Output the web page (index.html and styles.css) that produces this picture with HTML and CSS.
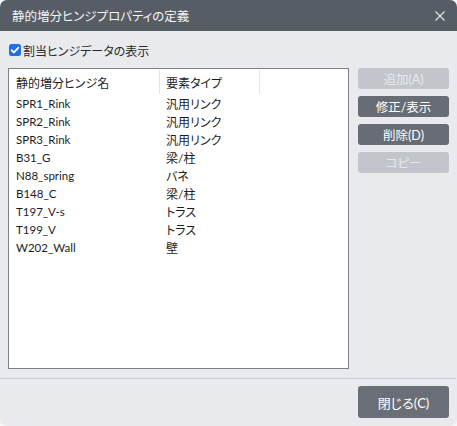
FILE: index.html
```html
<!DOCTYPE html>
<html lang="ja">
<head>
<meta charset="utf-8">
<title>静的増分ヒンジプロパティの定義</title>
<link rel="stylesheet" href="styles.css">
</head>
<body>
<div class="dialog">
  <div class="titlebar">
    <span class="title">静的増分ヒンジプロパティの定義</span>
    <svg class="close-x" width="10" height="10" viewBox="0 0 10 10"><path d="M0.5 0.5 L9.5 9.5 M9.5 0.5 L0.5 9.5" stroke="#e4e6e9" stroke-width="1.1" fill="none"/></svg>
  </div>
  <div class="check-row">
    <span class="checkbox"><svg width="12" height="12" viewBox="0 0 12 12"><path d="M2.6 6.2 L5 8.5 L9.4 3.6" stroke="#fff" stroke-width="1.8" fill="none" stroke-linecap="round" stroke-linejoin="round"/></svg></span>
    <span class="check-label">割当ヒンジデータの表示</span>
  </div>
  <div class="main">
    <div class="list">
      <div class="list-head">
        <div class="col c1">静的増分ヒンジ名</div>
        <div class="col c2">要素タイプ</div>
        <div class="col c3"></div>
      </div>
      <div class="row"><div class="col c1">SPR1_Rink</div><div class="col c2">汎用リンク</div></div>
      <div class="row"><div class="col c1">SPR2_Rink</div><div class="col c2">汎用リンク</div></div>
      <div class="row"><div class="col c1">SPR3_Rink</div><div class="col c2">汎用リンク</div></div>
      <div class="row"><div class="col c1">B31_G</div><div class="col c2">梁/柱</div></div>
      <div class="row"><div class="col c1">N88_spring</div><div class="col c2">バネ</div></div>
      <div class="row"><div class="col c1">B148_C</div><div class="col c2">梁/柱</div></div>
      <div class="row"><div class="col c1">T197_V-s</div><div class="col c2">トラス</div></div>
      <div class="row"><div class="col c1">T199_V</div><div class="col c2">トラス</div></div>
      <div class="row"><div class="col c1">W202_Wall</div><div class="col c2">壁</div></div>
    </div>
    <div class="buttons">
      <button class="btn disabled">追加(A)</button>
      <button class="btn">修正/表示</button>
      <button class="btn">削除(D)</button>
      <button class="btn disabled">コピー</button>
    </div>
  </div>
  <div class="separator"></div>
  <div class="footer">
    <button class="btn close-btn">閉じる(C)</button>
  </div>
</div>
</body>
</html>
```

FILE: styles.css
```css
* { box-sizing: border-box; }
html, body {
  margin: 0;
  padding: 0;
  background: #f7f7f8;
}
body {
  font-family: "Lato", "Noto Sans CJK JP", sans-serif;
  font-feature-settings: "palt" 1;
  color: #1c1c1c;
}
.dialog {
  width: 457px;
  height: 426px;
  background: #e9eaee;
  border-radius: 7px;
  overflow: hidden;
  display: flex;
  flex-direction: column;
}
.titlebar {
  height: 31px;
  flex: none;
  background: #575d65;
  display: flex;
  align-items: center;
  justify-content: space-between;
  padding: 0 12px 0 12px;
}
.title {
  color: #f4f5f6;
  font-size: 12.5px;
}
.close-x { display: block; }
.check-row {
  height: 37px;
  flex: none;
  display: flex;
  align-items: center;
  padding-left: 9px;
  padding-top: 1px;
}
.checkbox {
  width: 12px;
  height: 12px;
  border-radius: 2.5px;
  background: #1f6fe6;
  display: block;
  margin-right: 2px;
}
.checkbox svg { display: block; }
.check-label {
  font-size: 12px;
  color: #2a2a2a;
}
.main {
  display: flex;
  padding-left: 8px;
  gap: 9px;
  height: 301px;
  flex: none;
}
.list {
  width: 341px;
  height: 301px;
  background: #fff;
  border: 1px solid #7d8087;
  font-size: 12px;
}
.list-head {
  display: flex;
  height: 25px;
  align-items: stretch;
  padding-top: 1px;
}
.row {
  display: flex;
  height: 18px;
  align-items: center;
}
.col {
  padding-left: 7px;
  white-space: nowrap;
}
.c1 { width: 150px; }
.c2 { width: 100px; }
.c3 { width: 1px; }
.list-head .col {
  display: flex;
  align-items: center;
}
.list-head .c2, .list-head .c3 {
  border-left: 1px solid #e2e3e5;
}
.list-head .c2 { padding-left: 6px; }
.row .c1 { font-size: 11.5px; }
.row .c2 { padding-left: 7px; }
.buttons {
  width: 91px;
  display: flex;
  flex-direction: column;
  gap: 7px;
}
.btn {
  border: none;
  border-radius: 3px;
  background: #686d75;
  color: #ffffff;
  font-family: "Lato", "Noto Sans CJK JP", sans-serif;
  font-feature-settings: "palt" 1;
  font-size: 12.5px;
  height: 21px;
  width: 91px;
  padding: 0;
}
.btn.disabled {
  background: #c2c6cc;
  color: #e6e8eb;
}
.separator {
  height: 1px;
  flex: none;
  background: #c5cad1;
  margin-top: 9px;
  margin-right: 1px;
}
.footer {
  display: flex;
  justify-content: flex-end;
  padding: 7px 8px 0 0;
}
.close-btn {
  height: 32px;
  width: 91px;
  font-size: 13px;
  background: #6a6f77;
}
```
